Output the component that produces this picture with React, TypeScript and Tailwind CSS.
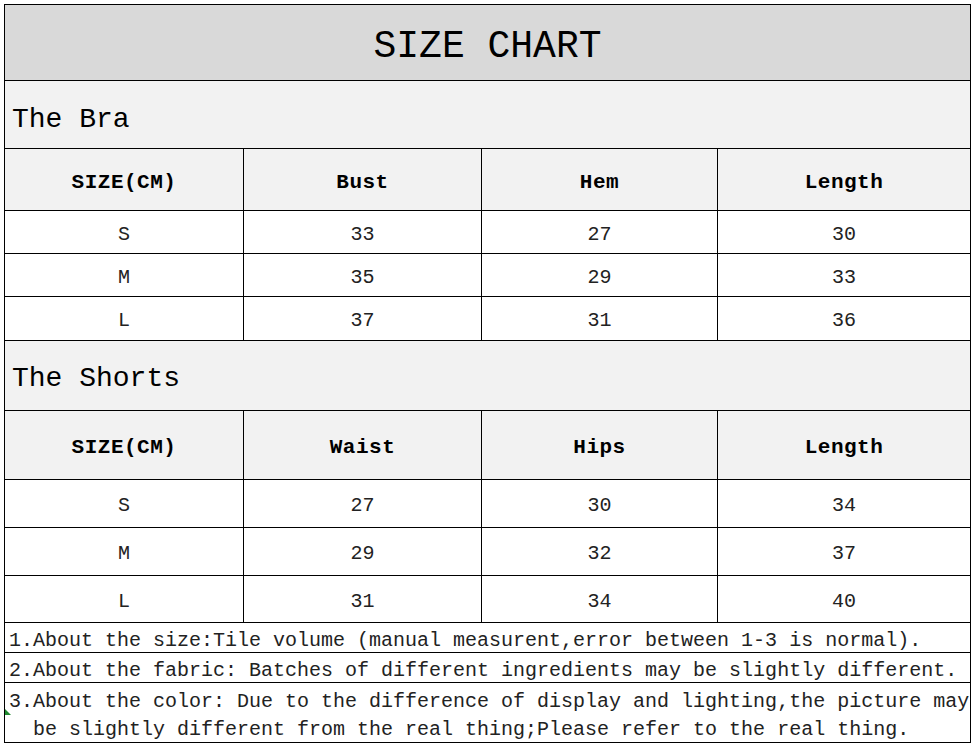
import React from "react";

const font = { fontFamily: '"Liberation Mono", "DejaVu Sans Mono", monospace' };

const cols = "grid grid-cols-[239px_238px_236px_1fr]";

function Row({ cells, h, bold, bg }: { cells: string[]; h: string; bold?: boolean; bg?: string }) {
  return (
    <div className={`${cols} ${h} ${bg ?? "bg-white"} border-b border-black`}>
      {cells.map((c, i) => (
        <div
          key={i}
          className={`flex items-center justify-center ${i < 3 ? "border-r border-black" : ""} ${
            bold ? "pt-[6px] text-[21px] font-bold tracking-[0.5px] text-black" : "pt-[5px] text-[20px] text-[#222]"
          }`}
        >
          {c}
        </div>
      ))}
    </div>
  );
}

export default function App() {
  return (
    <div className="min-h-[748px] bg-white pt-1 pl-1" style={font}>
      <div className="w-[967px] border border-black">
        <div className="h-[76px] bg-[#d9d9d9] border-b border-black flex items-center justify-center pt-[8px] text-[38px] text-black">
          SIZE CHART
        </div>

        <div className="h-[68px] bg-[#f2f2f2] border-b border-black flex items-center pl-[7px] pt-[10px] text-[28px] text-black">
          The Bra
        </div>
        <Row h="h-[62px]" bg="bg-[#f2f2f2]" bold cells={["SIZE(CM)", "Bust", "Hem", "Length"]} />
        <Row h="h-[43px]" cells={["S", "33", "27", "30"]} />
        <Row h="h-[43px]" cells={["M", "35", "29", "33"]} />
        <Row h="h-[44px]" cells={["L", "37", "31", "36"]} />

        <div className="h-[70px] bg-[#f2f2f2] border-b border-black flex items-center pl-[7px] pt-[6px] text-[28px] text-black">
          The Shorts
        </div>
        <Row h="h-[69px]" bg="bg-[#f2f2f2]" bold cells={["SIZE(CM)", "Waist", "Hips", "Length"]} />
        <Row h="h-[48px]" cells={["S", "27", "30", "34"]} />
        <Row h="h-[48px]" cells={["M", "29", "32", "37"]} />
        <Row h="h-[47px]" cells={["L", "31", "34", "40"]} />

        <div className="h-[30px] border-b border-black flex items-center pl-[4px] pt-[6px] text-[20px] text-[#222] whitespace-pre">
          1.About the size:Tile volume (manual measurent,error between 1-3 is normal).
        </div>
        <div className="h-[30px] border-b border-black flex items-center pl-[4px] pt-[6px] text-[20px] text-[#222] whitespace-pre">
          2.About the fabric: Batches of different ingredients may be slightly different.
        </div>
        <div className="relative h-[59px] pl-[4px] pt-[5px] text-[20px] leading-[28px] text-[#222] whitespace-pre">
          <div>3.About the color: Due to the difference of display and lighting,the picture may</div>
          <div>{"  be slightly different from the real thing;Please refer to the real thing."}</div>
          <svg className="absolute left-0 top-[26px]" width="6" height="6" viewBox="0 0 6 6">
            <polygon points="0,6 6,0 0,0" fill="#1e8a2e" transform="rotate(270 3 3)" />
          </svg>
        </div>
      </div>
    </div>
  );
}
